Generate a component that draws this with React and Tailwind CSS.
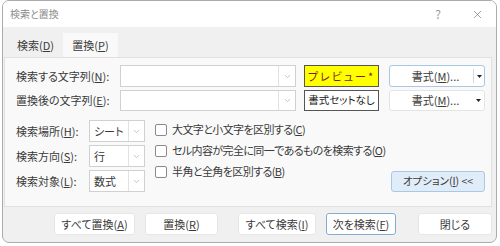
import { ChevronDown, X } from 'lucide-react';

const K = ({ children }) => <span className="underline underline-offset-[1px]">{children}</span>;

function Combo({ w }) {
  return (
    <div className={`${w} h-full flex bg-white border border-[#d0d0d0]`}>
      <div className="flex-1" />
      <div className="w-[17px] border-l border-[#e2e2e2] flex items-center justify-center">
        <ChevronDown size={9} strokeWidth={1.5} className="text-[#999]" />
      </div>
    </div>
  );
}

function Select({ value }) {
  return (
    <div className="w-[56px] h-full flex bg-white border border-[#d0d0d0]">
      <div className="flex-1 flex items-center pl-[4px]">{value}</div>
      <div className="w-[16px] border-l border-[#e2e2e2] flex items-center justify-center">
        <ChevronDown size={9} strokeWidth={1.5} className="text-[#999]" />
      </div>
    </div>
  );
}

function Arrow() {
  return (
    <svg width="5" height="3" viewBox="0 0 5 3">
      <path d="M0 0H5L2.5 3Z" fill="#222" />
    </svg>
  );
}

function FormatButton({ focused }) {
  return (
    <div
      className={`ml-[10px] w-[96px] h-full flex items-center bg-white rounded-[3px] border ${
        focused ? 'border-[#a9c8e6]' : 'border-[#e4e4e4]'
      }`}
    >
      <div className="flex-1 text-center pl-[8px]">
        書式(<K>M</K>)...
      </div>
      <div className={`w-[11px] h-[14px] flex items-center justify-center ${focused ? 'border-l border-[#d8d8d8]' : ''}`}>
        <Arrow />
      </div>
    </div>
  );
}

function Check({ children }) {
  return (
    <div className="h-[21px] flex items-center gap-[5px]">
      <div className="w-[12px] h-[12px] bg-white border border-[#8a8a8a] rounded-[2px]" />
      <span className="tracking-[-0.6px]">{children}</span>
    </div>
  );
}

function Btn({ w, children, blue }) {
  return (
    <div
      className={`${w} h-[22px] flex items-center justify-center bg-white rounded-[3px] border ${
        blue ? 'border-[#86acd6]' : 'border-[#e6e6e6]'
      }`}
    >
      {children}
    </div>
  );
}

export default function App() {
  return (
    <div className="w-[500px] h-[246px] bg-white font-['Noto_Sans_CJK_JP',sans-serif] text-[11px] leading-none text-[#3a3a3a] whitespace-nowrap [font-feature-settings:'palt']">
      <div className="ml-[2px] w-[495px] h-[243px] rounded-[7px] border border-[#ababab] overflow-hidden flex flex-col bg-[#f0f0f0]">
        {/* Title bar */}
        <div className="h-[26px] shrink-0 bg-white flex items-center pl-[7px] pr-[12px]">
          <span className="text-[10px] text-[#8c8c8c]">検索と置換</span>
          <span className="ml-auto mr-[30px] text-[12px] text-[#9a9a9a]">?</span>
          <X size={13} strokeWidth={1.2} className="text-[#707070]" />
        </div>

        {/* Tabs */}
        <div className="flex pl-[5px] pt-[6px] h-[30px] shrink-0">
          <div className="w-[55px] h-full flex items-center justify-center">
            検索(<K>D</K>)
          </div>
          <div className="w-[55px] h-[25px] bg-[#f9f9f9] flex items-center justify-center">
            置換(<K>P</K>)
          </div>
        </div>

        {/* Panel */}
        <div className="ml-[1px] w-[488px] h-[150px] shrink-0 bg-[#f9f9f9] border border-[#e0e0e0] pt-[7px] pl-[11px] pr-[6px]">
          <div className="flex items-center h-[22px]">
            <div className="w-[104px]">
              検索する文字列(<K>N</K>):
            </div>
            <Combo w="w-[176px]" />
            <div className="ml-[8px] w-[75px] h-full bg-[#ffff00] border border-[#555] flex items-center justify-center text-[#7b1f1f] tracking-[2px]">
              プレビュー*
            </div>
            <FormatButton focused />
          </div>
          <div className="flex items-center h-[21px] mt-[3px]">
            <div className="w-[104px]">
              置換後の文字列(<K>E</K>):
            </div>
            <Combo w="w-[176px]" />
            <div className="ml-[8px] w-[75px] h-full bg-white border border-[#555] flex items-center justify-center text-[#222] text-[10.5px]">
              書式セットなし
            </div>
            <FormatButton />
          </div>

          <div className="flex mt-[9px]">
            <div className="flex flex-col gap-[3px]">
              <div className="flex items-center h-[22px]">
                <div className="w-[73px]">
                  検索場所(<K>H</K>):
                </div>
                <Select value="シート" />
              </div>
              <div className="flex items-center h-[22px]">
                <div className="w-[73px]">
                  検索方向(<K>S</K>):
                </div>
                <Select value="行" />
              </div>
              <div className="flex items-center h-[22px]">
                <div className="w-[73px]">
                  検索対象(<K>L</K>):
                </div>
                <Select value="数式" />
              </div>
            </div>
            <div className="ml-[10px] -mt-[1px] flex flex-col">
              <Check>
                大文字と小文字を区別する(<K>C</K>)
              </Check>
              <Check>
                セル内容が完全に同一であるものを検索する(<K>O</K>)
              </Check>
              <Check>
                半角と全角を区別する(<K>B</K>)
              </Check>
            </div>
            <div className="ml-auto self-end w-[94px] h-[21px] rounded-[3px] bg-[#e0edf8] border border-[#a6c9e8] flex items-center justify-center text-[10.5px]">
              オプション(<K>I</K>) &lt;&lt;
            </div>
          </div>
        </div>

        {/* Bottom buttons */}
        <div className="flex mt-[6px] pl-[51px]">
          <Btn w="w-[81px]">
            すべて置換(<K>A</K>)
          </Btn>
          <div className="ml-[10px]">
            <Btn w="w-[73px]">
              置換(<K>R</K>)
            </Btn>
          </div>
          <div className="ml-[20px]">
            <Btn w="w-[78px]">
              すべて検索(<K>I</K>)
            </Btn>
          </div>
          <div className="ml-[10px]">
            <Btn w="w-[70px]" blue>
              次を検索(<K>F</K>)
            </Btn>
          </div>
          <div className="ml-[22px]">
            <Btn w="w-[74px]">閉じる</Btn>
          </div>
        </div>
      </div>
    </div>
  );
}
